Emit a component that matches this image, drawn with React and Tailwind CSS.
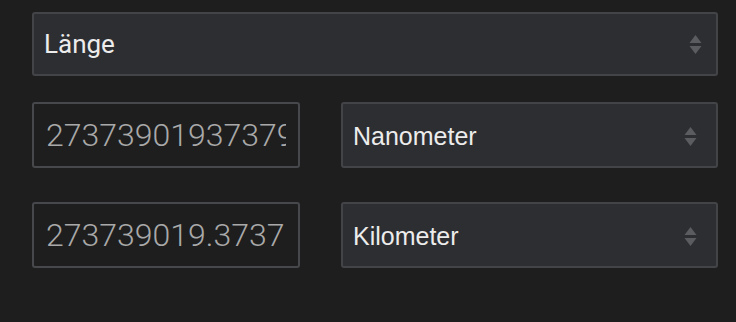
import React from "react";

function Arrows() {
  return (
    <svg width="13" height="21" viewBox="0 0 13 21" className="shrink-0">
      <path d="M6.5 1 L12.5 9 L0.5 9 Z" fill="#5b5c60" />
      <path d="M0.5 12 L12.5 12 L6.5 20 Z" fill="#5b5c60" />
    </svg>
  );
}

function SelectBox({ label, className, font }) {
  return (
    <div
      className={`flex items-center justify-between rounded-[3px] border-2 border-[#434448] bg-[#2d2e32] ${className}`}
    >
      <span className={`text-[#ececec] ${font}`}>{label}</span>
      <Arrows />
    </div>
  );
}

function NumberBox({ value }) {
  return (
    <div className="flex h-[66px] w-[268px] items-center rounded-[3px] border-2 border-[#47484b] bg-[#1e1e1e] pl-[12px] pr-[12px]">
      <div className="w-full overflow-hidden">
        <span className="whitespace-nowrap font-['Roboto',sans-serif] text-[32px] font-light text-[#a9a9a9]">
          {value}
        </span>
      </div>
    </div>
  );
}

export default function App() {
  const rows = [
    { value: "27373901937379", unit: "Nanometer" },
    { value: "273739019.3737", unit: "Kilometer" },
  ];

  return (
    <div className="h-[322px] w-[736px] bg-[#1e1e1e] pl-8 pr-[18px] pt-3">
      <SelectBox
        label="Länge"
        className="h-[64px] pl-[10px] pr-[14px]"
        font="font-['Roboto',sans-serif] text-[26px]"
      />
      <div className="mt-[26px] flex flex-col gap-[34px]">
        {rows.map((r) => (
          <div key={r.unit} className="flex justify-between">
            <NumberBox value={r.value} />
            <SelectBox
              label={r.unit}
              className="h-[66px] w-[377px] pl-[10px] pr-[19px] pt-[3px]"
              font="font-['Liberation_Sans',Arial,sans-serif] text-[25px]"
            />
          </div>
        ))}
      </div>
    </div>
  );
}
